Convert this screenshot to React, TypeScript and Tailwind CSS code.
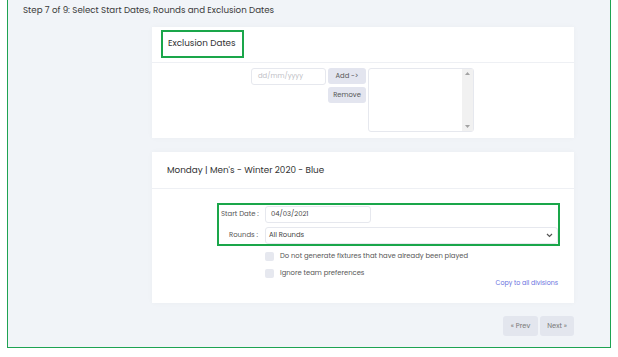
import React from 'react';

const font = { fontFamily: 'Poppins, "Open Sans", "Noto Sans", sans-serif' };

export default function App() {
  return (
    <div className="w-[618px] h-[357px] bg-white overflow-hidden" style={font}>
      <div className="ml-[7px] w-[604px] h-[348px] border-l border-r border-b border-[#1ea352] bg-[#f1f4f8] flex flex-col">
        <div className="h-[27px] pl-[15px] pt-[3px] text-[8.7px] text-[#3a3a3a] leading-[14px] whitespace-nowrap">
          Step 7 of 9: Select Start Dates, Rounds and Exclusion Dates
        </div>

        {/* Exclusion dates card */}
        <div className="ml-[144px] w-[422px] h-[111px] bg-white shadow-[0_0_6px_rgba(0,0,0,0.03)]">
          <div className="h-[36px] border-b border-[#eef0f4] pl-[9px] pt-[3px]">
            <div className="w-[83px] h-[28px] border-2 border-[#1aa64a] flex items-center pl-[5px] text-[8.8px] text-[#333] whitespace-nowrap">
              Exclusion Dates
            </div>
          </div>
          <div className="flex pl-[99px] pt-[5px] gap-[2px]">
            <div className="w-[75px] h-[17px] border border-[#e6e8ee] rounded-[3px] flex items-center pl-[6px] text-[6.8px] text-[#c0c0c6]">
              dd/mm/yyyy
            </div>
            <div className="flex flex-col gap-[3px]">
              <div className="w-[38px] h-[16px] rounded-[3px] bg-[#e3e5ef] flex items-center justify-center text-[6.8px] text-[#555]">
                Add -&gt;
              </div>
              <div className="w-[38px] h-[16px] rounded-[3px] bg-[#e3e5ef] flex items-center justify-center text-[6.8px] text-[#555]">
                Remove
              </div>
            </div>
            <div className="w-[106px] h-[64px] border border-[#e6e8ee] rounded-[3px] flex justify-end">
              <div className="w-[11px] h-full bg-[#f1f1f1] flex flex-col items-center justify-between py-[3px]">
                <svg width="5" height="3" viewBox="0 0 5 3"><path d="M0 3 L2.5 0 L5 3 Z" fill="#a3a3a3" /></svg>
                <svg width="5" height="3" viewBox="0 0 5 3"><path d="M0 0 L2.5 3 L5 0 Z" fill="#a3a3a3" /></svg>
              </div>
            </div>
          </div>
        </div>

        {/* Division card */}
        <div className="ml-[144px] mt-[14px] w-[422px] h-[151px] bg-white shadow-[0_0_6px_rgba(0,0,0,0.03)]">
          <div className="h-[37px] border-b border-[#eef0f4] pl-[15px] pt-[2px] flex items-center text-[8.8px] text-[#333]">
            Monday | Men's - Winter 2020 - Blue
          </div>
          <div className="ml-[65px] mt-[14px] w-[343px] h-[43px] border-2 border-[#1aa64a] pt-[1px] pl-[2px]">
            <div className="flex items-center h-[17px]">
              <div className="w-[37px] text-right text-[6.9px] text-[#555] whitespace-nowrap">Start Date :</div>
              <div className="ml-[7px] w-[106px] h-[17px] border border-[#e6e8ee] rounded-[3px] flex items-center pl-[5px] text-[6.8px] text-[#444]">
                04/03/2021
              </div>
            </div>
            <div className="flex items-center h-[17px] mt-[4px]">
              <div className="w-[37px] text-right text-[6.9px] text-[#555] whitespace-nowrap">Rounds :</div>
              <div className="ml-[7px] w-[293px] h-[17px] border border-[#e6e8ee] rounded-[3px] flex items-center justify-between pl-[3px] pr-[4px] text-[6.8px] text-[#444]">
                <span>All Rounds</span>
                <svg width="7" height="5" viewBox="0 0 7 5"><path d="M1 1 L3.5 3.5 L6 1" fill="none" stroke="#555" strokeWidth="1.2" /></svg>
              </div>
            </div>
          </div>
          <div className="ml-[113px] mt-[5px] flex items-center gap-[6px]">
            <div className="w-[9px] h-[9px] rounded-[2px] bg-[#e6e8ef]" />
            <span className="text-[6.8px] text-[#555]">Do not generate fixtures that have already been played</span>
          </div>
          <div className="ml-[113px] mt-[7px] flex items-center gap-[6px]">
            <div className="w-[9px] h-[9px] rounded-[2px] bg-[#e6e8ef]" />
            <span className="text-[6.8px] text-[#555]">Ignore team preferences</span>
          </div>
          <div className="mr-[16px] mt-[0px] text-right text-[6.3px] text-[#6b73e0]">Copy to all divisions</div>
        </div>

        <div className="ml-[495px] mt-[13px] flex gap-[2px]">
          <div className="w-[35px] h-[20px] rounded-[3px] bg-[#e3e6ee] flex items-center justify-center text-[6.8px] text-[#777]">
            « Prev
          </div>
          <div className="w-[34px] h-[20px] rounded-[3px] bg-[#e3e6ee] flex items-center justify-center text-[6.8px] text-[#777]">
            Next »
          </div>
        </div>
      </div>
    </div>
  );
}
